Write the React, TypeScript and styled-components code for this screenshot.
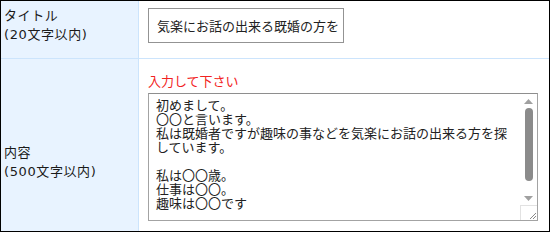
import React from "react";
import styled, { createGlobalStyle } from "styled-components";

const GlobalStyle = createGlobalStyle`
  html, body {
    margin: 0;
    padding: 0;
    background: #ffffff;
  }

  body {
    font-family: "Noto Sans CJK JP", "Noto Sans", sans-serif;
    font-size: 13px;
    color: #222222;
  }
`;

const FormTable = styled.div`
  box-sizing: border-box;
  width: 550px;
  height: 232px;
  border: 1px solid #000000;
  display: grid;
  grid-template-columns: 138px 1fr;
  grid-template-rows: 58px 1fr;
`;

const LabelCell = styled.div<{ $top: number; $divider?: boolean }>`
  box-sizing: border-box;
  background: #e8f3ff;
  border-right: 1px solid #cce4fc;
  border-bottom: ${(p) => (p.$divider ? "1px solid #cce4fc" : "none")};
  padding: ${(p) => p.$top}px 0 0 3px;
  font-family: "DejaVu Sans", "Noto Sans CJK JP", sans-serif;
  letter-spacing: 0.6px;
  line-height: 19px;
  color: #1a1a1a;
`;

const ValueCell = styled.div<{ $divider?: boolean }>`
  box-sizing: border-box;
  border-bottom: ${(p) => (p.$divider ? "1px solid #cce4fc" : "none")};
  padding: 0 0 0 9px;
  display: flex;
  flex-direction: column;
  align-items: flex-start;
`;

const TitleInput = styled.input`
  box-sizing: border-box;
  width: 196px;
  height: 35px;
  margin-top: 7px;
  padding: 0 0 1px 8px;
  border: 1px solid #939393;
  background: #ffffff;
  font-family: inherit;
  font-size: 13px;
  color: #222222;
  outline: none;
`;

const Notice = styled.div`
  color: #f22222;
  line-height: 19px;
  margin-top: 12px;
  margin-bottom: 3px;
`;

const AreaBox = styled.div`
  box-sizing: border-box;
  width: 390px;
  height: 128px;
  border: 1px solid #a3a3a3;
  border-top-color: #8e8e8e;
  display: flex;
  background: #ffffff;
`;

const TextArea = styled.textarea`
  box-sizing: border-box;
  flex: 1;
  height: 100%;
  margin: 0;
  padding: 4px 8px 0 7px;
  border: none;
  outline: none;
  resize: none;
  overflow: hidden;
  font-family: inherit;
  font-size: 13px;
  line-height: 14px;
  color: #222222;
  background: transparent;
`;

const ScrollBar = styled.div`
  width: 17px;
  display: flex;
  flex-direction: column;
  background: #ffffff;
`;

const Arrow = styled.div`
  height: 14px;
  display: flex;
  align-items: center;
  justify-content: center;
`;

const Track = styled.div`
  flex: 1;
  display: flex;
  justify-content: center;
  padding-bottom: 10px;
`;

const Thumb = styled.div`
  width: 8px;
  height: 73px;
  border-radius: 4px;
  background: #8b8b8b;
`;

const Corner = styled.div`
  box-sizing: border-box;
  height: 15px;
  border-top: 1px solid #e2e2e2;
  border-left: 1px solid #e2e2e2;
  display: flex;
  align-items: flex-end;
  justify-content: flex-end;
`;

const ArrowIcon = ({ down }: { down?: boolean }) => (
  <svg width="9" height="5" viewBox="0 0 9 5">
    <polygon
      points={down ? "0,0 9,0 4.5,5" : "0,5 9,5 4.5,0"}
      fill="#a0a0a0"
    />
  </svg>
);

const Grip = () => (
  <svg width="9" height="9" viewBox="0 0 9 9">
    <path d="M8 2 L2 8 M8 5 L5 8" stroke="#8a8a8a" strokeWidth="1" />
  </svg>
);

const bodyText =
  "初めまして。\n〇〇と言います。\n私は既婚者ですが趣味の事などを気楽にお話の出来る方を探しています。\n\n私は〇〇歳。\n仕事は〇〇。\n趣味は〇〇です";

export default function App() {
  return (
    <>
      <GlobalStyle />
      <FormTable>
        <LabelCell $top={5} $divider>
          タイトル
          <br />
          (20文字以内)
        </LabelCell>
        <ValueCell $divider>
          <TitleInput defaultValue="気楽にお話の出来る既婚の方を" />
        </ValueCell>

        <LabelCell $top={84}>
          内容
          <br />
          (500文字以内)
        </LabelCell>
        <ValueCell>
          <Notice>入力して下さい</Notice>
          <AreaBox>
            <TextArea defaultValue={bodyText} />
            <ScrollBar>
              <Arrow>
                <ArrowIcon />
              </Arrow>
              <Track>
                <Thumb />
              </Track>
              <Arrow>
                <ArrowIcon down />
              </Arrow>
              <Corner>
                <Grip />
              </Corner>
            </ScrollBar>
          </AreaBox>
        </ValueCell>
      </FormTable>
    </>
  );
}
